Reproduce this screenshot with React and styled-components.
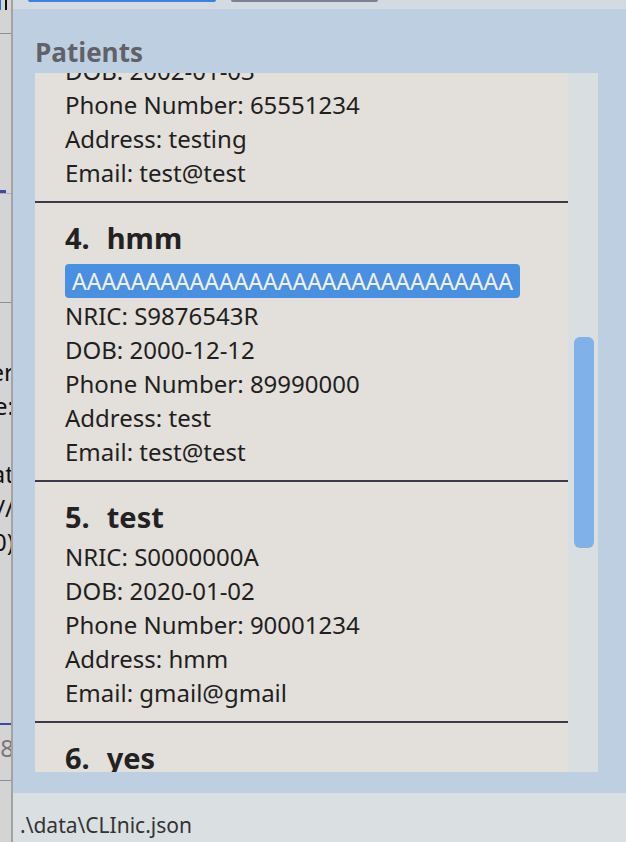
import React from 'react';
import styled, { createGlobalStyle } from 'styled-components';

const GlobalStyle = createGlobalStyle`
  html, body {
    margin: 0;
    padding: 0;
    background: #d3d3d3;
  }
  body {
    font-family: "Noto Sans", "Open Sans", sans-serif;
  }
`;

const Screen = styled.div`
  display: flex;
  width: 626px;
  height: 842px;
  overflow: hidden;
`;

/* the window behind, cut off at the left edge */
const BackWindow = styled.div`
  width: 11px;
  flex-shrink: 0;
  display: flex;
  flex-direction: column;
  overflow: hidden;
  background: #d4d4d4;
  border-right: 2px solid #a3a3a3;
`;

const BackTop = styled.div`
  height: 10px;
  display: flex;
  gap: 4px;
  span:first-child { width: 1px; background: #2a6fd0; }
  span:last-child { width: 2px; background: #111; }
`;

const BackRule = styled.div`
  height: ${p => p.$h ?? 1}px;
  margin-top: ${p => p.$top}px;
  width: ${p => p.$w || '100%'};
  background: ${p => p.$color || '#8e8e8e'};
  border-top: ${p => (p.$dashed ? '2px dashed #3b48a8' : 'none')};
`;

const BackLines = styled.div`
  margin-top: ${p => p.$top}px;
  display: flex;
  flex-direction: column;
  align-items: flex-end;
  margin-right: -3px;
  font-size: 24px;
  line-height: 34px;
  white-space: pre;
  color: ${p => p.$color || '#111'};
`;

const AppWindow = styled.div`
  flex: 1;
  display: flex;
  flex-direction: column;
  min-width: 0;
`;

const TopStrip = styled.div`
  height: 9px;
  flex-shrink: 0;
  display: flex;
  align-items: flex-start;
  gap: 15px;
  padding-left: 15px;
  background: #d3dae1;
`;

const ButtonStub = styled.div`
  width: ${p => p.$w}px;
  height: 2px;
  border-radius: 0 0 3px 3px;
  background: ${p => p.$color};
`;

const Panel = styled.div`
  flex: 1;
  display: flex;
  flex-direction: column;
  padding: 26px 28px 21px 22px;
  background: #bfcfe2;
  min-height: 0;
`;

const PanelTitle = styled.h2`
  margin: 0 0 4px 0;
  height: 34px;
  font-family: "Open Sans", "Noto Sans", sans-serif;
  font-weight: 700;
  font-size: 26px;
  line-height: 34px;
  color: #606268;
`;

const ListFrame = styled.div`
  display: flex;
  height: 699px;
`;

const Viewport = styled.div`
  width: 533px;
  overflow: hidden;
  background: #e3dfda;
`;

const ListContent = styled.div`
  margin-top: ${p => p.$offset}px;
`;

const Card = styled.div`
  padding: 15px 0 11px 30px;
  border-bottom: 2px solid #3a3b46;
  color: #1f1f1f;
`;

const CardTitle = styled.div`
  display: flex;
  gap: 17px;
  height: 40px;
  font-size: 29px;
  font-weight: 700;
  line-height: 40px;
  color: #222;
`;

const Tags = styled.div`
  display: flex;
  gap: 6px;
  margin: 6px 0 -2px;
`;

const Tag = styled.span`
  display: inline-block;
  padding: 0 7px;
  height: 34px;
  line-height: 34px;
  font-size: 23px;
  color: #eef0f5;
  background: #4a90e2;
  border-radius: 4px;
`;

const Details = styled.div`
  margin-top: 3px;
  display: flex;
  flex-direction: column;
`;

const Line = styled.div`
  height: 34px;
  line-height: 34px;
  font-size: 24px;
  white-space: nowrap;
`;

const Track = styled.div`
  width: 30px;
  padding-left: 6px;
  box-sizing: border-box;
  background: #d9dee1;
`;

const Thumb = styled.div`
  width: 20px;
  margin-top: ${p => p.$top}px;
  height: ${p => p.$h}px;
  border-radius: 6px;
  background: #80b1e8;
`;

const StatusBar = styled.div`
  flex-shrink: 0;
  padding: 17px 0 2px 7px;
  background: #dadfe2;
  font-size: 21px;
  line-height: 30px;
  color: #333;
  white-space: nowrap;
  overflow: hidden;
`;

const patients = [
  { id: 3, name: 'test', nric: 'S1234567A', dob: '2002-01-03', phone: '65551234', address: 'testing', email: 'test@test', tags: [] },
  { id: 4, name: 'hmm', nric: 'S9876543R', dob: '2000-12-12', phone: '89990000', address: 'test', email: 'test@test', tags: ['AAAAAAAAAAAAAAAAAAAAAAAAAAAAAA'] },
  { id: 5, name: 'test', nric: 'S0000000A', dob: '2020-01-02', phone: '90001234', address: 'hmm', email: 'gmail@gmail', tags: [] },
  { id: 6, name: 'yes', nric: 'S1111111B', dob: '1999-09-09', phone: '91234567', address: 'yes', email: 'yes@yes', tags: [] },
];

function PatientCard({ p }) {
  return (
    <Card>
      <CardTitle>
        <span>{p.id}.</span>
        <span>{p.name}</span>
      </CardTitle>
      {p.tags.length > 0 && (
        <Tags>
          {p.tags.map(t => <Tag key={t}>{t}</Tag>)}
        </Tags>
      )}
      <Details>
        <Line>NRIC: {p.nric}</Line>
        <Line>DOB: {p.dob}</Line>
        <Line>Phone Number: {p.phone}</Line>
        <Line>Address: {p.address}</Line>
        <Line>Email: {p.email}</Line>
      </Details>
    </Card>
  );
}

export default function App() {
  return (
    <>
      <GlobalStyle />
      <Screen>
        <BackWindow>
          <BackTop><span /><span /></BackTop>
          <BackRule $top={23} />
          <BackRule $top={156} $h={3} $w="6px" $color="#3c4aa6" />
          <BackRule $top={0} $color="#b0b0b0" />
          <BackRule $top={108} />
          <BackLines $top={52}>
            <span>Number</span>
            <span>Phone:</span>
            <span> </span>
            <span>that</span>
            <span>http://</span>
            <span>(0)</span>
          </BackLines>
          <BackRule $top={164} $h={0} $dashed />
          <BackLines $top={6} $color="#777">
            <span>8</span>
          </BackLines>
          <BackRule $top={15} />
        </BackWindow>
        <AppWindow>
          <TopStrip>
            <ButtonStub $w={188} $color="#3b82e0" />
            <ButtonStub $w={147} $color="#7c8294" />
          </TopStrip>
          <Panel>
            <PanelTitle>Patients</PanelTitle>
            <ListFrame>
              <Viewport>
                <ListContent $offset={-111}>
                  {patients.map(p => <PatientCard key={p.id} p={p} />)}
                </ListContent>
              </Viewport>
              <Track>
                <Thumb $top={264} $h={211} />
              </Track>
            </ListFrame>
          </Panel>
          <StatusBar>.\data\CLInic.json</StatusBar>
        </AppWindow>
      </Screen>
    </>
  );
}
